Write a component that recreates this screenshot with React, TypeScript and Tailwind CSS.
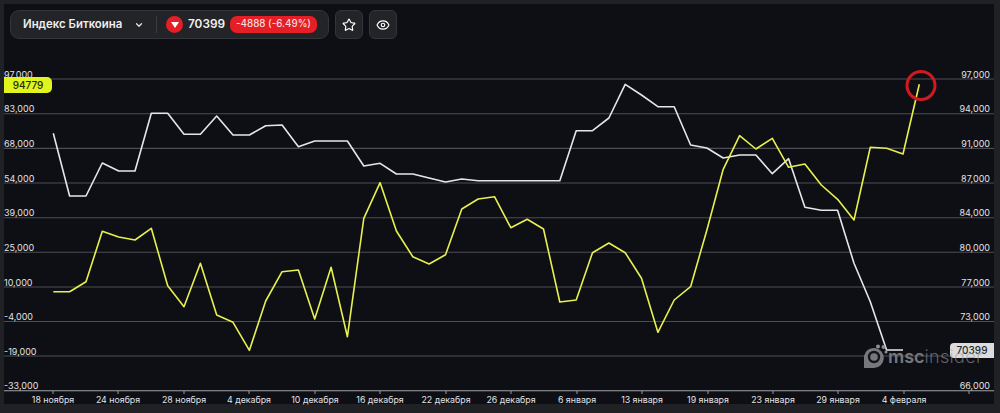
import { ChevronDown, Eye, Star } from "lucide-react";

const gridY = [79, 113.8, 148.4, 183, 217.7, 252.3, 287, 321.5, 356, 390.7];
const leftLabels = ["97,000", "83,000", "68,000", "54,000", "39,000", "25,000", "10,000", "-4,000", "-19,000", "-33,000"];
// 70,000 sits under the price tag, so it is left out
const rightLabels = ["97,000", "94,000", "91,000", "87,000", "84,000", "80,000", "77,000", "73,000", "", "66,000"];

const dates = [
  ["18 ноября", 53],
  ["24 ноября", 118],
  ["28 ноября", 184],
  ["4 декабря", 249],
  ["10 декабря", 315],
  ["16 декабря", 380],
  ["22 декабря", 446],
  ["26 декабря", 511],
  ["6 января", 577],
  ["13 января", 642],
  ["19 января", 708],
  ["23 января", 773],
  ["29 января", 838],
  ["4 февраля", 904],
] as const;

const stepX = 16.34;

const whiteLine = [
  133.3, 196, 196, 163, 171, 171, 113.3, 113.3, 134.3, 134.3, 116, 135, 135, 125.7, 125, 146.7, 141, 141, 141, 166, 163.3,
  174, 174, 178, 182, 179, 180.7, 180.7, 180.7, 180.7, 180.7, 180.7, 130.7, 130.7, 118, 84.3, 95, 106.7, 106.7, 145, 148,
  158, 155, 155, 173.7, 158.7, 207.3, 210.3, 210.3, 263.3, 301.7, 350, 350,
];

const yellowLine = [
  291.7, 291.7, 281.7, 231.3, 237, 240, 228.3, 285.7, 306.7, 263.3, 315, 322.3, 350.3, 301, 271.7, 270, 319, 267.3, 336.7,
  218.3, 182.7, 231, 256.7, 264, 254.7, 209, 199, 196.7, 227.7, 219.3, 229, 302, 300, 252.7, 243, 252.7, 278.3, 332.3, 300,
  286.7, 230, 169.3, 135.7, 149, 138.3, 167.3, 164, 185, 199.3, 220, 147.3, 148.3, 154, 84.3,
];

const toPoints = (line: number[]) => line.map((y, i) => `${(53.3 + i * stepX).toFixed(1)},${y}`).join(" ");

const Chart = () => (
  <svg viewBox="0 0 1000 413" className="absolute left-0 top-0 h-[413px] w-[1000px]">
    {gridY.map((y) => (
      <line key={y} x1="4" x2="994" y1={y} y2={y} stroke="#4c4d52" strokeWidth="1.1" />
    ))}
    <line x1="4" x2="994" y1="390.7" y2="390.7" stroke="#7c7d81" strokeWidth="1.2" />

    {dates.map(([label, x]) => (
      <g key={label}>
        <line x1={x} x2={x} y1="391" y2="394" stroke="#9a9a9e" />
        <text x={x} y="403" textAnchor="middle" fill="#e2e2e4" fontSize="8.8">
          {label}
        </text>
      </g>
    ))}
    <line x1="969" x2="969" y1="391" y2="394" stroke="#9a9a9e" />

    {leftLabels.map((label, i) => (
      <text key={label} x="4" y={gridY[i] - 1.4} fill="#e2e2e4" fontSize="9">
        {label}
      </text>
    ))}
    {rightLabels.map((label, i) =>
      label ? (
        <text key={label} x="990" y={gridY[i] - 1.4} textAnchor="end" fill="#e2e2e4" fontSize="9">
          {label}
        </text>
      ) : null,
    )}

    <polyline points={toPoints(whiteLine)} fill="none" stroke="#e6e6ea" strokeWidth="1.6" strokeLinejoin="round" />
    <polyline points={toPoints(yellowLine)} fill="none" stroke="#e8f04f" strokeWidth="1.6" strokeLinejoin="round" />
    <circle cx="921" cy="85.5" r="14" fill="none" stroke="#cf1a20" strokeWidth="3" />
  </svg>
);

const Watermark = () => (
  <div className="absolute left-[863px] top-[344px] flex items-center">
    <svg width="25" height="25" viewBox="0 0 25 25">
      <path d="M1 24V12a10 10 0 1 1 10 12z" fill="#77787c" />
      <circle cx="11" cy="13" r="6.2" fill="#14151a" />
      <circle cx="11" cy="13" r="3.8" fill="#77787c" />
      <circle cx="15" cy="2.4" r="2" fill="#8d8e92" />
      <circle cx="20.5" cy="3" r="2" fill="#8d8e92" />
      <circle cx="23" cy="8" r="1.5" fill="#8d8e92" />
    </svg>
    <span className="text-[18px] leading-none font-semibold text-[#77787c]">msc</span>
    <span className="text-[18px] leading-none font-light tracking-[0.3px] text-[#9a9b9f]/60">insider</span>
  </div>
);

const App = () => {
  return (
    <div className="relative h-[413px] w-[1000px] overflow-hidden bg-[#202124] font-['Inter',sans-serif]">
      <div className="absolute left-[4px] top-[4px] h-[400px] w-[990px] bg-[#0e0f14]" />
      <Chart />

      <div className="relative flex items-center gap-[6px] pl-[10px] pt-[10px]">
        <div className="flex h-[29px] w-[319px] shrink-0 items-center rounded-[9px] border border-[#34353a] bg-[#232428] pl-[12px]">
          <span className="w-[100px] whitespace-nowrap text-[11.4px] font-semibold text-[#eeeeef]">Индекс Биткоина</span>
          <ChevronDown size={10} strokeWidth={3} className="ml-[11px] text-[#e4e4e6]" />
          <div className="ml-[12px] h-[17px] w-px bg-[#3b3c41]" />
          <div className="ml-[9px] flex h-[17px] w-[17px] shrink-0 items-center justify-center rounded-full bg-[#e51f25]">
            <div className="h-0 w-0 border-x-[4px] border-t-[6px] border-x-transparent border-t-white" />
          </div>
          <span className="ml-[5px] w-[36px] text-[11.8px] font-semibold text-[#f2f2f3]">70399</span>
          <span className="ml-[6px] flex h-[17px] w-[87px] items-center justify-center whitespace-nowrap rounded-[7px] bg-[#e51f25] text-[9.8px] font-medium text-[#f6dcdc]">
            -4888 (-6.49%)
          </span>
        </div>
        <button className="flex h-[29px] w-[28px] items-center justify-center rounded-[6px] border border-[#34353a] bg-[#232428] text-white">
          <Star size={14} strokeWidth={2} />
        </button>
        <button className="flex h-[29px] w-[28px] items-center justify-center rounded-[6px] border border-[#34353a] bg-[#232428] text-white">
          <Eye size={14} strokeWidth={2} />
        </button>
      </div>

      {/* price tags sitting on the axes */}
      <div className="absolute left-[4px] top-[77px] flex h-[16px] w-[48px] items-center justify-center rounded-r-[5px] bg-[#e0f51d] text-[10px] font-medium text-[#26280a]">
        94779
      </div>
      <div className="absolute left-[950px] top-[343px] flex h-[15px] w-[44px] items-center justify-center rounded-l-[4px] bg-[#dcdcdc] text-[10px] font-medium text-[#26272b]">
        70399
      </div>
      <Watermark />
    </div>
  );
};

export default App;
